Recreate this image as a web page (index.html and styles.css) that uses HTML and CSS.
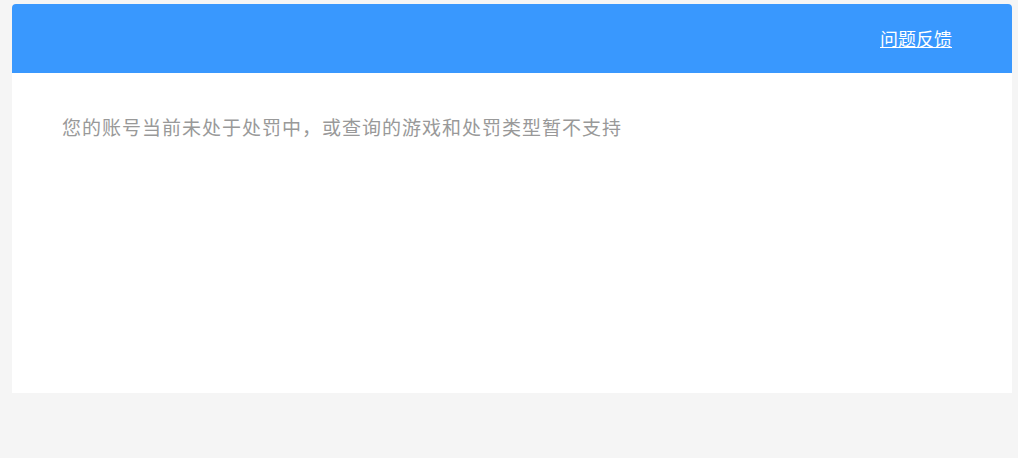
FILE: index.html
```html
<!DOCTYPE html>
<html lang="zh-CN">
<head>
  <meta charset="UTF-8" />
  <meta name="viewport" content="width=device-width, initial-scale=1.0" />
  <title>处罚查询</title>
  <link rel="stylesheet" href="styles.css">
</head>
<body>
  <div class="panel">
    <div class="panel-head">
      <a class="feedback" href="#">问题反馈</a>
    </div>
    <div class="panel-body">
      <p class="empty-tip">您的账号当前未处于处罚中，或查询的游戏和处罚类型暂不支持</p>
    </div>
  </div>
</body>
</html>
```

FILE: styles.css
```css
html, body {
  margin: 0;
  height: 100%;
  background: #f5f5f5;
  font-family: "Noto Sans CJK SC", "Noto Sans", sans-serif;
}

body {
  padding: 4px 6px 0 12px;
  box-sizing: border-box;
}

.panel {
  width: 1000px;
  background: #fff;
  border-radius: 4px 4px 0 0;
}

.panel-head {
  height: 69px;
  background: #3998fe;
  border-radius: 4px 4px 0 0;
  display: flex;
  align-items: center;
  justify-content: flex-end;
  padding: 0 60px 2px;
  box-sizing: border-box;
}

.feedback {
  color: #fff;
  font-size: 18px;
  line-height: 24px;
  text-decoration: underline;
}

.panel-body {
  height: 320px;
  padding: 0 50px;
  box-sizing: border-box;
  overflow: hidden;
}

.empty-tip {
  margin: 42px 0 0;
  font-size: 19px;
  letter-spacing: 1px;
  line-height: 24px;
  color: #999;
}
```
